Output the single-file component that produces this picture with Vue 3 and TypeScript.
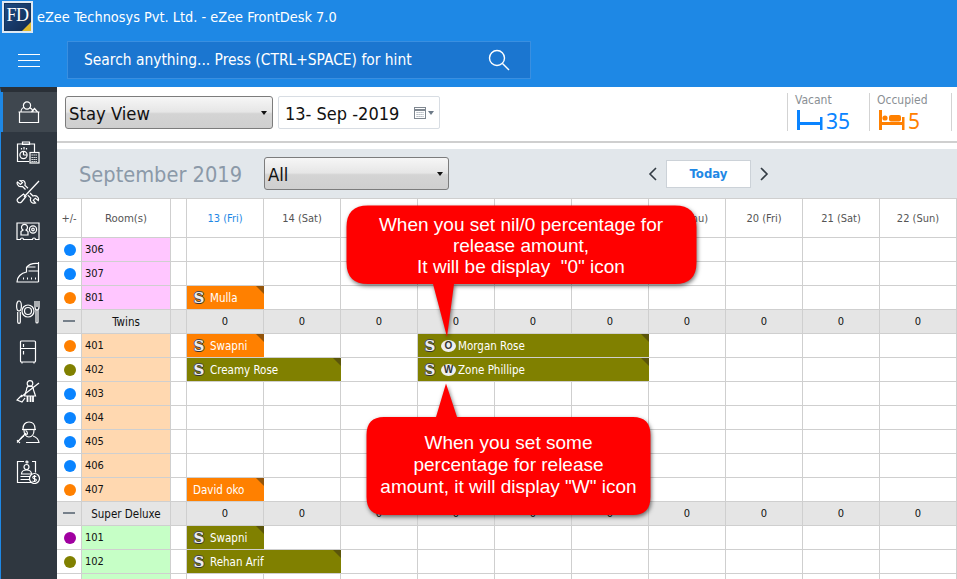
<script setup lang="ts">
type Booking = { name: string; start: number; span: number; color: 'orange' | 'olive'; s?: boolean; badge?: string }
type Row = { kind: 'room'; no: string; dot: string; tint: string; bookings?: Booking[] } | { kind: 'group'; name: string }
type Segment = { key: string; booking?: Booking }

const days = ['13 (Fri)', '14 (Sat)', '15 (Sun)', '16 (Mon)', '17 (Tue)', '18 (Wed)', '19 (Thu)', '20 (Fri)', '21 (Sat)', '22 (Sun)']
const blue = '#0a84ff', orange = '#ff8000', olive = '#808000', purple = '#a000a0'
const pink = '#ffc6ff', peach = '#ffd8b0', green = '#c6ffc6'

const rows: Row[] = [
  { kind: 'room', no: '306', dot: blue, tint: pink },
  { kind: 'room', no: '307', dot: blue, tint: pink },
  { kind: 'room', no: '801', dot: orange, tint: pink, bookings: [{ name: 'Mulla', start: 0, span: 1, color: 'orange', s: true }] },
  { kind: 'group', name: 'Twins' },
  { kind: 'room', no: '401', dot: orange, tint: peach, bookings: [
    { name: 'Swapni', start: 0, span: 1, color: 'orange', s: true },
    { name: 'Morgan Rose', start: 3, span: 3, color: 'olive', s: true, badge: 'O' },
  ] },
  { kind: 'room', no: '402', dot: olive, tint: peach, bookings: [
    { name: 'Creamy Rose', start: 0, span: 2, color: 'olive', s: true },
    { name: 'Zone Phillipe', start: 3, span: 3, color: 'olive', s: true, badge: 'W' },
  ] },
  { kind: 'room', no: '403', dot: blue, tint: peach },
  { kind: 'room', no: '404', dot: blue, tint: peach },
  { kind: 'room', no: '405', dot: blue, tint: peach },
  { kind: 'room', no: '406', dot: blue, tint: peach },
  { kind: 'room', no: '407', dot: orange, tint: peach, bookings: [{ name: 'David oko', start: 0, span: 1, color: 'orange' }] },
  { kind: 'group', name: 'Super Deluxe' },
  { kind: 'room', no: '101', dot: purple, tint: green, bookings: [{ name: 'Swapni', start: 0, span: 1, color: 'olive', s: true }] },
  { kind: 'room', no: '102', dot: olive, tint: green, bookings: [{ name: 'Rehan Arif', start: 0, span: 2, color: 'olive', s: true }] },
  { kind: 'room', no: '', dot: blue, tint: green },
]

function segments(bookings: Booking[] = []): Segment[] {
  const out: Segment[] = []
  for (let d = 0; d < days.length; d++) {
    const b = bookings.find((x) => x.start === d)
    if (b) {
      out.push({ key: 'b' + d, booking: b })
      d += b.span - 1
    } else {
      out.push({ key: 'd' + d })
    }
  }
  return out
}
</script>

<template>
  <div class="app">
    <header class="topbar">
      <div class="titleline">
        <div class="logo"><span>FD</span><i></i></div>
        <span class="apptitle">eZee Technosys Pvt. Ltd. - eZee FrontDesk 7.0</span>
      </div>
      <div class="searchline">
        <div class="burger"><i></i><i></i><i></i></div>
        <div class="search">
          <span>Search anything... Press (CTRL+SPACE) for hint</span>
          <svg width="24" height="24" viewBox="0 0 24 24" fill="none" stroke="#fff" stroke-width="1.4"><circle cx="10" cy="10" r="7.5"/><path d="M15.5 15.5 22 22"/></svg>
        </div>
      </div>
    </header>

    <div class="body">
      <nav class="side">
        <div class="navitem active">
          <svg viewBox="0 0 24 24"><circle cx="10" cy="5.5" r="3.6"/><path d="M4 12c0-3 2-4.5 3.5-4.5M16 12c0-2-1.5-3.6-3.5-4.5"/><path d="M14.5 12l3-3.5 3 3.500"/><path d="M1.500 12h21M2.500 12v10.500h19V12"/></svg>
        </div>
        <div class="navitem">
          <svg viewBox="0 0 24 24"><path d="M13 21.500H1.500V4h17v9"/><path d="M6.500 4V2h7v2.500h-7z"/><circle cx="7.500" cy="15" r="3.600"/><path d="M7.500 15v-3.500M7.500 15h3.500M5.500 9.500V8M8 9.500V7M10.500 9.500V8"/><rect x="14" y="12.500" width="9" height="10.500"/><path d="M15.500 15h6M15.500 17.500h6M15.500 19.500h6M15.500 21.500h6" stroke-dasharray="1.300 .7"/></svg>
        </div>
        <div class="navitem">
          <svg viewBox="0 0 24 24"><path d="M23 1 8 17"/><path d="M10 16.500l-4.500 5.500c-1 1-2.500 1-3.500 0s-1-2.500 0-3.500l5.500-4.500z"/><path d="M9.500 9.500 6.500 6.500C4.500 7 2.500 6.500 1.500 4.500 1 3.500 1 2.500 1.500 2l3 2.500 2-2L4 .5c2-.7 4.500 0 5 2 .3 1 .2 2-.2 2.700l3.200 3"/><path d="M14 13l3 3c2-.6 4 0 5 1.500.6 1 .7 2 .3 3l-3-2.300-2 2 2.300 2.700c-2 .8-4.500 0-5-2-.3-1-.2-2 .2-2.700l-3-3"/></svg>
        </div>
        <div class="navitem">
          <svg viewBox="0 0 24 24"><path d="M1 3h22v16.500h-3.500a1.500 1.500 0 0 0-3 0h-9a1.500 1.500 0 0 0-3 0H1z"/><path d="M5 15v-3.500l2-1.500a3 3 0 1 1 3 0l2 1.500V15z"/><circle cx="17" cy="9.500" r="3.600"/><circle cx="17" cy="9.500" r="1.300"/></svg>
        </div>
        <div class="navitem">
          <svg viewBox="0 0 24 24"><path d="M22.500 22H1c0-5 4-9 9.500-10V7.500c2-3 6-4.500 12-4"/><path d="M22.500 2v20M12.500 11H22.500M10.500 7h9"/><path d="M7 18.500h1M11 18.500h1M15 18.500h1M19 18.500h1" stroke-width="2"/></svg>
        </div>
        <div class="navitem">
          <svg viewBox="0 0 24 24"><ellipse cx="3" cy="6" rx="2.400" ry="5"/><path d="M1.700 12v10a1.300 1.300 0 0 0 2.600 0V12"/><circle cx="12" cy="11" r="6"/><circle cx="12" cy="11" r="3.500"/><path d="M19 1v6c0 2 1 3 2 3s2-1 2-3V1M21 1v6M20 10v12a1 1 0 0 0 2 0V10"/></svg>
        </div>
        <div class="navitem">
          <svg viewBox="0 0 24 24"><rect x="4.500" y="1" width="15" height="21" rx="1"/><path d="M4.500 8.500h15M7.500 4v3M7.500 11v3.500M6 22v1.500M18 22v1.500"/></svg>
        </div>
        <div class="navitem">
          <svg viewBox="0 0 24 24"><circle cx="14" cy="3.500" r="2.800"/><path d="M10.500 10c0-2.500 1.500-3.800 3.500-3.800s3.500 1.300 3.500 3.800l2 6H8.500z"/><path d="M23 3 5 17"/><path d="M6 15 1 20l5 2 3-4"/><path d="M11.500 16v6M14.500 16v6M17 16v6" stroke-width="1.800"/></svg>
        </div>
        <div class="navitem">
          <svg viewBox="0 0 24 24"><path d="M7 9c0-4.500 2.500-7 6-7s6 2.500 6 7"/><path d="M6 9.500h14"/><path d="M8 10c0 4 2 7 5 7s5-3 5-7"/><path d="M8 16c-2 .8-3 2-3.500 3M17 16c3 1 5.500 3 6 6.500H10"/><path d="M1 22.500l9-9.500M9.500 10.500c1.500.5 2.500 2.500 1.500 4l-2 .5"/><path d="M1 20c.8 1 1.800 2 3 3"/></svg>
        </div>
        <div class="navitem">
          <svg viewBox="0 0 24 24"><path d="M16 1.500h3.500v11M15 22.500H1.500V1.500H8"/><circle cx="11" cy="2" r="1"/><circle cx="10.500" cy="7" r="2.500"/><path d="M5.500 14c0-2.500 2.500-4 5-4s5 1.500 5 4z"/><path d="M4.500 16.500H14M4.500 19.500H13"/><circle cx="18.500" cy="18.500" r="5"/><path d="M20.300 16.700c-1-1-3.600-.7-3.600.8 0 1.700 3.700 1 3.700 2.600 0 1.500-2.800 1.800-4 .700M18.500 15v7" stroke-width="1.100"/></svg>
        </div>
      </nav>

      <main class="main">
        <section class="toolbar">
          <div class="selectbox stay">
            <span>Stay View</span>
            <i class="caret"></i>
          </div>
          <div class="datebox">
            <span>13- Sep -2019</span>
            <span class="calendar">
              <svg width="12" height="12" viewBox="0 0 12 12"><rect x=".5" y=".5" width="11" height="11" fill="#fff" stroke="#7f8790"/><path d="M1 3h10" stroke="#7f8790" stroke-width="2"/><path d="M2.500 5.500h7M2.500 7.500h7M2.500 9.500h7" stroke="#9aa3ad" stroke-dasharray="1.200 .8"/></svg>
              <i></i>
            </span>
          </div>
          <div class="stats">
            <div class="stat vacant">
              <label>Vacant</label>
              <div class="figure">
                <svg width="26" height="23" viewBox="0 0 26 23" fill="#0a84ff"><rect x="0" y="0" width="3" height="20"/><rect x="0" y="12" width="25" height="3"/><rect x="23" y="7" width="2.500" height="13"/></svg>
                <b>35</b>
              </div>
            </div>
            <div class="stat occupied">
              <label>Occupied</label>
              <div class="figure">
                <svg width="26" height="23" viewBox="0 0 26 23" fill="#ff8000"><rect x="0" y="0" width="3" height="20"/><rect x="0" y="12" width="25" height="3"/><rect x="23" y="7" width="2.500" height="13"/><circle cx="6" cy="8" r="2.600"/><rect x="10" y="5" width="12" height="6.500" rx="2"/></svg>
                <b>5</b>
              </div>
            </div>
          </div>
        </section>

        <section class="calhead">
          <h2>September 2019</h2>
          <div class="selectbox all">
            <span>All</span>
            <i class="caret"></i>
          </div>
          <div class="pager">
            <svg width="10" height="14" viewBox="0 0 10 14" fill="none" stroke="#333c44" stroke-width="1.600"><path d="M8 1 2 7l6 6"/></svg>
            <button class="today">Today</button>
            <svg width="10" height="14" viewBox="0 0 10 14" fill="none" stroke="#333c44" stroke-width="1.600"><path d="M2 1l6 6-6 6"/></svg>
          </div>
        </section>

        <section class="grid">
          <div class="row head">
            <div class="cell pm">+/-</div>
            <div class="cell rooms">Room(s)</div>
            <div class="cell"></div>
            <div v-for="(d, i) in days" :key="d" class="cell" :class="{ cur: i === 0 }">{{ d }}</div>
          </div>

          <template v-for="(r, ri) in rows" :key="ri">
            <div v-if="r.kind === 'group'" class="row group">
              <div class="cell"><i class="minus"></i></div>
              <div class="cell gname">{{ r.name }}</div>
              <div class="cell"></div>
              <div v-for="d in days" :key="d" class="cell">0</div>
            </div>
            <div v-else class="row room">
              <div class="cell"><i class="dot" :style="{ background: r.dot }"></i></div>
              <div class="cell roomno" :style="{ background: r.tint }">{{ r.no }}</div>
              <div class="cell"></div>
              <template v-for="s in segments(r.bookings)" :key="s.key">
                <div v-if="s.booking" class="cell bookcell" :style="{ gridColumn: 'span ' + s.booking.span }">
                  <div class="bar" :class="s.booking.color">
                    <span v-if="s.booking.s" class="sicon">S</span>
                    <span v-if="s.booking.badge" class="badge">{{ s.booking.badge }}</span>
                    <span>{{ s.booking.name }}</span>
                  </div>
                </div>
                <div v-else class="cell"></div>
              </template>
            </div>
          </template>
        </section>
      </main>
    </div>

    <aside class="callout one">
      <svg width="351" height="133" viewBox="0 0 351 133"><path d="M22 .5H329Q350.500 .5 350.500 22V57.500Q350.500 79 329 79H108L101 132L87 79H22Q.5 79 .5 57.500V22Q.5 .5 22 .5Z"/></svg>
      <p>When you set nil/0 percentage for<br>release amount,<br>It will be display&nbsp; "0" icon</p>
    </aside>
    <aside class="callout two">
      <svg width="285" height="132" viewBox="0 0 285 132"><path d="M18 34H70L80 .5L91 34H267Q284.500 34 284.500 52V114Q284.500 132 267 132H18Q.5 132 .5 114V52Q.5 34 18 34Z"/></svg>
      <p>When you set some<br>percentage for release<br>amount, it will display "W" icon</p>
    </aside>
  </div>
</template>

<style scoped>
.app {
  position: relative;
  width: 957px;
  height: 579px;
  overflow: hidden;
  background: #fff;
  font-family: "DejaVu Sans Condensed", "DejaVu Sans", "Noto Sans", sans-serif;
  color: #111;
}
.topbar {
  height: 87px;
  background: #1e88e5;
  color: #fff;
  box-sizing: border-box;
}
.titleline {
  height: 41px;
  display: flex;
  align-items: flex-start;
  padding: 1px 0 0 2px;
  box-sizing: border-box;
}
.logo {
  position: relative;
  width: 31px;
  height: 32px;
  box-sizing: border-box;
  border: 2px solid #dfe9f3;
  outline: 1px solid #12335c;
  outline-offset: -3px;
  background: linear-gradient(135deg, #1d4c86, #12294f);
  overflow: hidden;
}
.logo span {
  display: block;
  font: 400 18px/24px "Liberation Serif", serif;
  color: #fff;
  text-align: center;
  letter-spacing: -.5px;
}
.logo i {
  position: absolute;
  right: 0;
  bottom: 0;
  width: 0;
  height: 0;
  border-left: 9px solid transparent;
  border-bottom: 9px solid #e0b92a;
}
.apptitle {
  margin-left: 4px;
  font-size: 14.400px;
  line-height: 33px;
  white-space: nowrap;
}
.searchline {
  display: flex;
  align-items: flex-start;
}
.burger {
  width: 67px;
  padding: 13px 0 0 18px;
  box-sizing: border-box;
}
.burger i {
  display: block;
  width: 22px;
  height: 1px;
  background: #fff;
  margin-bottom: 5px;
}
.search {
  width: 464px;
  height: 38px;
  box-sizing: border-box;
  background: #1b76d0;
  border: 1px solid #3a8fe0;
  display: flex;
  align-items: center;
  justify-content: space-between;
  padding: 0 19px 1px 16px;
  font-size: 15.400px;
}
.body {
  display: flex;
  height: 492px;
}
.side {
  width: 57px;
  flex: none;
  box-sizing: border-box;
  background: #2f3740;
  border-left: 1px solid #1e88e5;
  border-top: 5px solid #2a3037;
}
.navitem {
  height: 40px;
  display: flex;
  align-items: center;
  justify-content: center;
  padding-right: 2px;
}
.navitem.active {
  background: #3f474f;
  border-left: 3px solid #1e88e5;
  margin-left: -1px;
  padding-right: 2px;
}
.navitem svg {
  width: 24px;
  height: 24px;
  fill: none;
  stroke: #fff;
  stroke-width: 1.2;
}
.main {
  flex: 1;
  min-width: 0;
  display: flex;
  flex-direction: column;
}
.toolbar {
  flex: none;
  display: flex;
  align-items: flex-start;
  padding: 9px 5px 0 8px;
  box-sizing: border-box;
  border-bottom: 2px solid #cfcfcf;
  height: 56px;
}
.selectbox {
  box-sizing: border-box;
  height: 33px;
  border: 1px solid #7c7c7c;
  border-radius: 3px;
  background: linear-gradient(#f6f6f6, #e6e6e6 48%, #d4d4d4 54%, #cfcfcf);
  display: flex;
  align-items: center;
  justify-content: space-between;
  padding: 2px 5px 0 3px;
  font-size: 18.300px;
  color: #111;
}
.stay { width: 208px; }
.all { width: 185px; }
.caret {
  width: 0;
  height: 0;
  border-left: 3.500px solid transparent;
  border-right: 3.500px solid transparent;
  border-top: 4px solid #111;
  margin-top: -2px;
}
.datebox {
  width: 162px;
  height: 33px;
  box-sizing: border-box;
  margin-left: 5px;
  border: 1px solid #d8dde3;
  border-radius: 2px;
  display: flex;
  align-items: center;
  justify-content: space-between;
  padding: 1px 5px 0 6px;
  font-size: 18px;
  white-space: nowrap;
}
.calendar {
  display: flex;
  align-items: center;
  gap: 2px;
}
.calendar i {
  width: 0;
  height: 0;
  border-left: 3.500px solid transparent;
  border-right: 3.500px solid transparent;
  border-top: 4px solid #6d7a88;
}
.stats {
  margin-left: auto;
  display: flex;
  margin-top: -3px;
}
.stat {
  width: 82px;
  height: 38px;
  box-sizing: border-box;
  border-left: 1px solid #d3d3d3;
  padding-left: 7px;
}
.stat.occupied {
  border-right: 1px solid #d3d3d3;
  width: 83px;
}
.stat label {
  display: block;
  font-size: 12px;
  line-height: 14px;
  color: #8a8f94;
}
.figure {
  display: flex;
  align-items: flex-start;
  gap: 3px;
  margin-left: 2px;
  margin-top: 3px;
}
.figure b {
  font: 400 21px/22px "Noto Sans", sans-serif;
}
.vacant b { color: #0a84ff; }
.occupied b { color: #ff8000; }
.calhead {
  margin-top: 6px;
  height: 49px;
  flex: none;
  background: #e2e7eb;
  display: flex;
  align-items: center;
  padding-left: 22px;
  position: relative;
}
.calhead h2 {
  margin: 2px 0 0;
  width: 185px;
  font-size: 21.600px;
  font-weight: 400;
  color: #8b99a8;
  white-space: nowrap;
}
.pager {
  margin-left: 199px;
  display: flex;
  align-items: center;
  gap: 8px;
}
.today {
  width: 85px;
  height: 28px;
  box-sizing: border-box;
  background: #fff;
  border: 1px solid #ccd2d8;
  color: #1e88e5;
  font: 700 13px "DejaVu Sans Condensed", "DejaVu Sans", sans-serif;
  padding: 0;
}
.grid {
  border-top: 1px solid #cfcfcf;
}
.row {
  display: grid;
  grid-template-columns: 25px 89px 16px repeat(10, 77px);
  height: 24px;
}
.row.head {
  height: 39px;
}
.cell {
  box-sizing: border-box;
  border-right: 1px solid #cfcfcf;
  border-bottom: 1px solid #cfcfcf;
  display: flex;
  align-items: center;
  justify-content: center;
  font-size: 11px;
  min-width: 0;
}
.head .cell {
  color: #555;
  font-size: 11px;
}
.head .rooms {
  font-size: 11.300px;
}
.head .cur {
  color: #1e88e5;
}
.group .cell {
  background: #e5e5e5;
}
.group .gname {
  font-size: 11.500px;
}
.minus {
  width: 12px;
  height: 2px;
  background: #76808a;
  margin-top: -2px;
}
.dot {
  width: 12px;
  height: 12px;
  border-radius: 50%;
  margin-left: 2px;
}
.roomno {
  justify-content: flex-start;
  padding-left: 3px;
  font-size: 11px;
}
.bookcell {
  border-right: 0;
  align-items: stretch;
  justify-content: stretch;
}
.bar {
  position: relative;
  flex: 1;
  display: flex;
  align-items: center;
  padding-left: 6px;
  color: #fff;
  font-size: 11.500px;
  white-space: nowrap;
  overflow: hidden;
}
.bar::after {
  content: "";
  position: absolute;
  top: 0;
  right: 0;
  border-top: 8px solid rgba(60, 50, 20, .55);
  border-left: 8px solid transparent;
}
.orange { background: #ff8000; }
.olive { background: #808000; }
.sicon {
  width: 12px;
  margin-right: 5px;
  text-align: center;
  font: 700 15px/16px "DejaVu Serif", serif;
  color: #eee;
  text-shadow: -1px 0 #4a4a4a, 1px 0 #4a4a4a, 0 1px #333, 0 -1px #4a4a4a;
}
.badge {
  width: 15px;
  height: 12px;
  margin: 0 2px 0 0;
  border-radius: 50%;
  background: #eee;
  color: #333;
  text-align: center;
  font: 700 10px/12px "Liberation Sans", sans-serif;
}
.callout {
  position: absolute;
  margin: 0;
  color: #fff;
  text-align: center;
  font-family: "Liberation Sans", Arial, sans-serif;
  font-size: 19px;
}
.callout svg {
  display: block;
  fill: #ff0000;
  filter: drop-shadow(1px 2px 2px rgba(0, 0, 0, .55));
}
.callout p {
  position: absolute;
  left: 0;
  right: 0;
  margin: 0;
  white-space: nowrap;
}
.one {
  left: 345.500px;
  top: 205px;
}
.one p {
  top: 9px;
  line-height: 21px;
}
.two {
  left: 366px;
  top: 383px;
}
.two p {
  top: 49px;
  line-height: 22px;
}
</style>
